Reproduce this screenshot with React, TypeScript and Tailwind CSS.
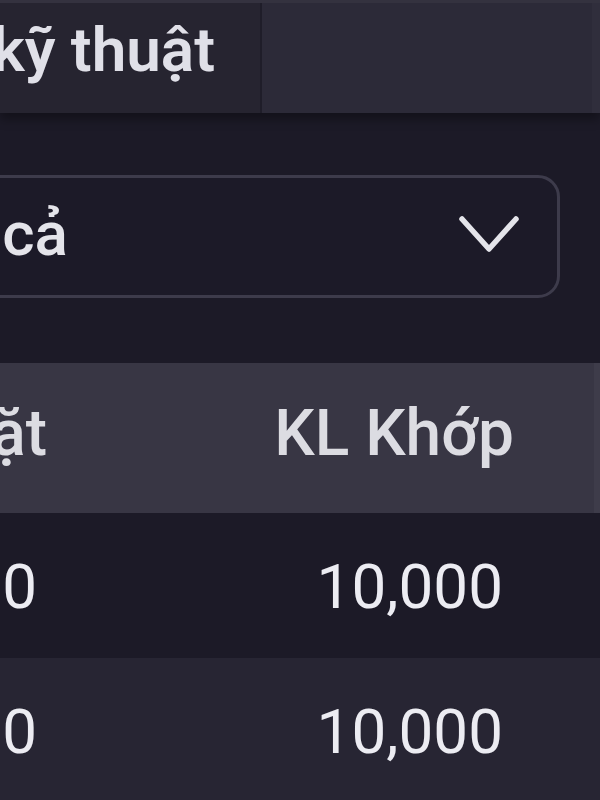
import React from "react";

export default function App() {
  const rows = [
    { a: "10,000", b: "10,000", bg: "bg-[#1c1a27]" },
    { a: "10,000", b: "10,000", bg: "bg-[#272533]" },
  ];
  return (
    <div className="w-[600px] h-[800px] overflow-hidden bg-[#1c1a27] flex flex-col text-[#e8e8ee]" style={{ fontFamily: "Roboto, 'Noto Sans', sans-serif" }}>
      {/* Tabs */}
      <div className="h-[113px] shrink-0 flex border-t-[3px] border-[#34323f] shadow-[0_6px_10px_rgba(0,0,0,0.35)] relative z-10">
        <div className="w-[260px] shrink-0 bg-[#262430] flex justify-end items-center pr-[45px] pb-[16px] overflow-visible">
          <span className="whitespace-nowrap text-[62px] font-semibold text-[#e0e0e8] leading-none">Phân tích kỹ thuật</span>
        </div>
        <div className="w-[2px] bg-[#1f1d29]" />
        <div className="flex-1 bg-[#2c2a38] border-r-[8px] border-[#302e3c]" />
      </div>

      {/* Filter */}
      <div className="h-[250px] shrink-0 flex items-start pt-[62px]">
        <div className="ml-[-200px] w-[760px] h-[123px] border-[3px] border-[#3d3b4b] rounded-[22px] bg-[#1c1a28] flex items-center">
          <div className="w-[265px] shrink-0 flex justify-end">
            <span className="whitespace-nowrap text-[62px] font-medium text-[#e4e4ea] leading-none pb-[6px]">Tất cả</span>
          </div>
          <div className="flex-1" />
          <svg width="62" height="40" viewBox="0 0 62 40" fill="none" className="mr-[37px] mb-[4px]">
            <polyline points="4,4 31,34 58,4" stroke="#e4e4ea" strokeWidth="5.5" strokeLinecap="round" strokeLinejoin="round" />
          </svg>
        </div>
      </div>

      {/* Header */}
      <div className="h-[150px] shrink-0 bg-[#383644] flex items-center border-r-[6px] border-[#3e3c4a]">
        <div className="w-[47px] shrink-0 flex justify-end">
          <span className="whitespace-nowrap text-[64px] font-medium text-[#dcdce2] leading-none pb-[8px]">KL Đặt</span>
        </div>
        <div className="w-[467px] shrink-0 flex justify-end">
          <span className="whitespace-nowrap text-[64px] font-medium text-[#dcdce2] leading-none pb-[8px]">KL Khớp</span>
        </div>
      </div>

      {/* Rows */}
      {rows.map((r, i) => (
        <div key={i} className={`h-[145px] shrink-0 flex items-center ${r.bg}`}>
          <div className="w-[37px] shrink-0 flex justify-end">
            <span className="whitespace-nowrap text-[62px] text-[#ececf2] leading-none pt-[2px]">{r.a}</span>
          </div>
          <div className="w-[466px] shrink-0 flex justify-end">
            <span className="whitespace-nowrap text-[62px] text-[#ececf2] leading-none pt-[2px]">{r.b}</span>
          </div>
        </div>
      ))}
    </div>
  );
}
